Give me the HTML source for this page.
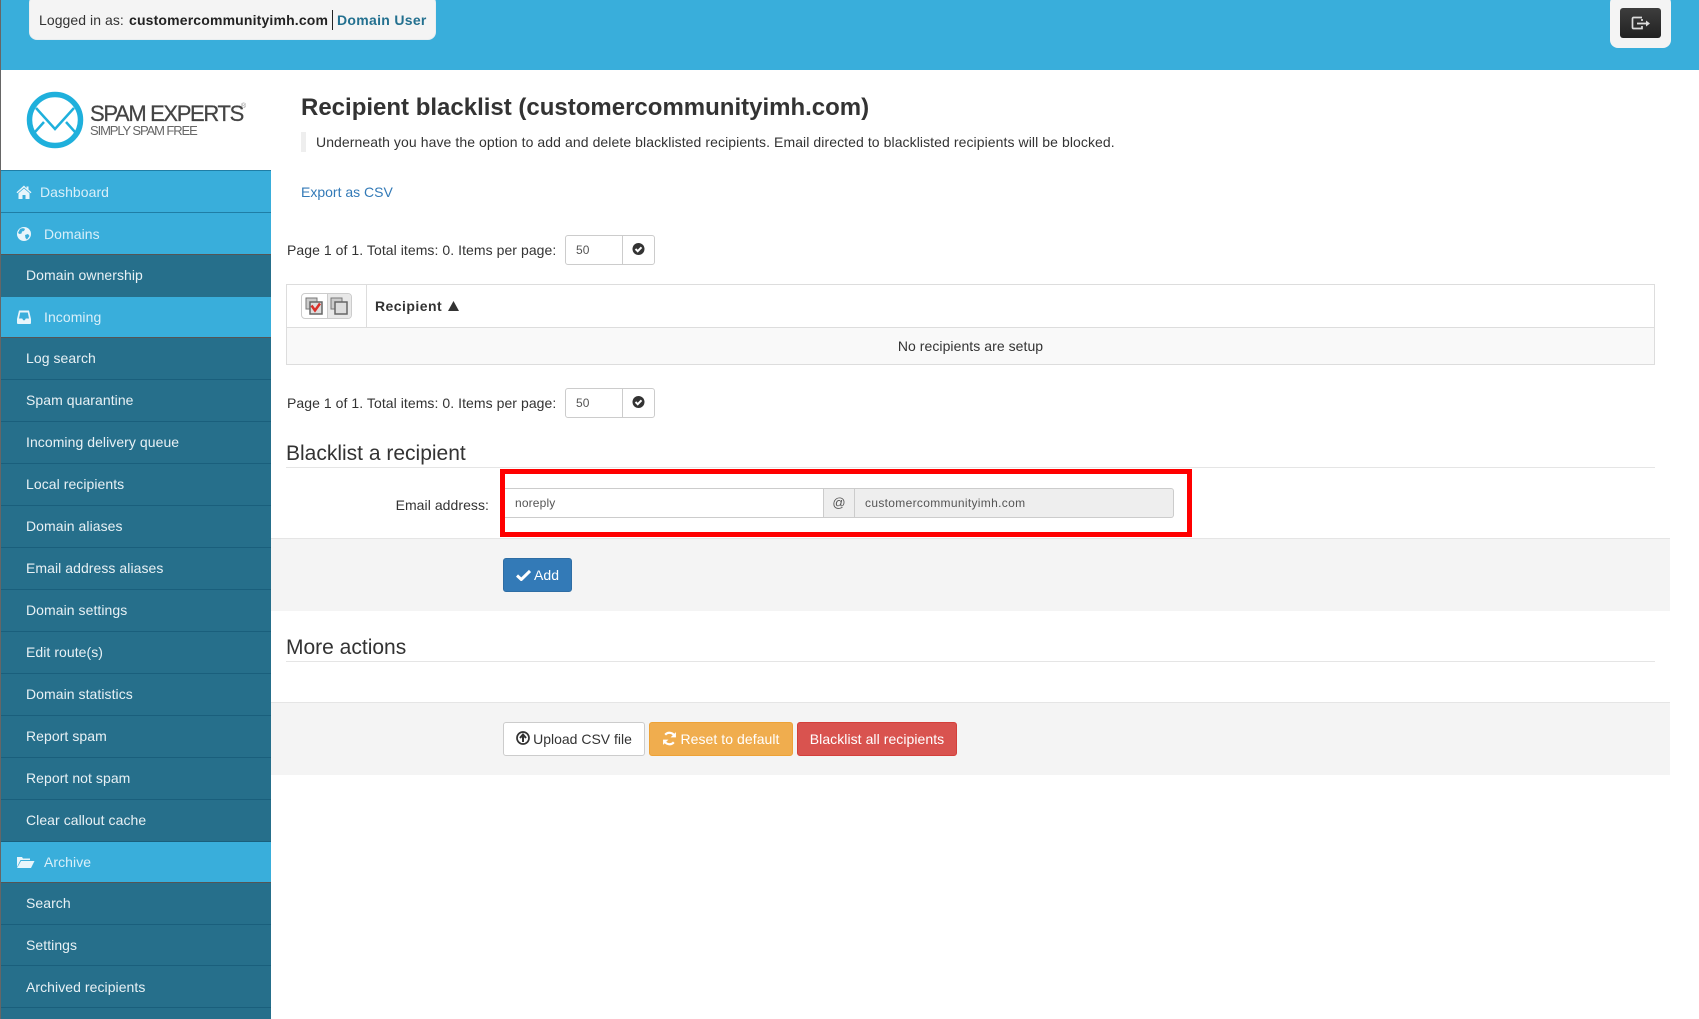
<!DOCTYPE html>
<html><head><meta charset="utf-8"><title>Recipient blacklist</title>
<style>
*{box-sizing:border-box}
html,body{margin:0;padding:0;width:1699px;height:1019px;overflow:hidden;background:#fff;font-family:"Liberation Sans",sans-serif;font-size:14px;color:#333;letter-spacing:.06px}
.a{position:absolute}
.t{position:absolute;white-space:nowrap;line-height:20px}
.r{position:absolute;left:1px;width:270px;background:#266f8b;border-top:1px solid #1a5f7c;color:#e8f1f5;display:flex;align-items:center;padding-left:25px;padding-bottom:2px}
.r.b{background:#39aedb;border-top:1px solid #1f7ea6;color:#d9eff9;padding-left:0;padding-bottom:0}
.r.g{border-top:1px solid #555}
.r.n{padding-bottom:0}
.r svg{position:absolute;left:15px;top:50%;margin-top:-8px}
.ig{position:absolute;left:565px;width:90px;height:30px;border:1px solid #ccc;border-radius:3px;background:#fff}
.ig i{position:absolute;left:56px;top:0;bottom:0;width:1px;background:#ccc}
.ig span{position:absolute;left:10px;top:4px;font-size:12px;line-height:20px;color:#555}
.ig svg{position:absolute;left:64px;top:5px}
.ft{position:absolute;left:271px;width:1399px;height:73px;background:#f4f4f4;border-top:1px solid #e5e5e5}
.btn{position:absolute;height:34px;border-radius:3px;border:1px solid;line-height:32px;text-align:center;white-space:nowrap}
h3{position:absolute;margin:0;left:286px;font-size:21px;line-height:24px;font-weight:400;color:#333;white-space:nowrap;letter-spacing:0}
.hr{position:absolute;left:286px;width:1369px;height:1px;background:#e5e5e5}
</style></head><body>
<div class="a" style="left:0;top:0;width:1px;height:1019px;background:#666;z-index:5"></div>
<div class="a" style="left:0;top:0;width:1699px;height:70px;background:#39aedb"></div>
<div class="a" style="left:29px;top:-5px;width:407px;height:45px;background:#f4f4f4;border-radius:8px;border:1px solid #e9eef0"></div>
<div class="t" style="left:39px;top:10px">Logged in as:</div>
<div class="t" style="left:129px;top:10px;font-weight:700;color:#222;letter-spacing:.16px">customercommunityimh.com</div>
<div class="a" style="left:332px;top:10px;width:1px;height:20px;background:#222"></div>
<div class="t" style="left:337px;top:10px;font-weight:700;color:#23708f;letter-spacing:.3px">Domain User</div>

<div class="a" style="left:1610px;top:-5px;width:61px;height:53px;background:#f4f4f4;border-radius:8px"></div>
<div class="a" style="left:1620px;top:8px;width:41px;height:30px;border-radius:3px;background:linear-gradient(#3d3d3d,#222)"></div>
<svg class="a" style="left:1631px;top:16px" width="21" height="15" viewBox="0 0 21 15" fill="none"><path d="M11 1.500H2.500a1 1 0 0 0-1 1v9a1 1 0 0 0 1 1H11v-2.500" stroke="#ddd" stroke-width="1.700"/><path d="M11 3v2" stroke="#ddd" stroke-width="1.700"/><path d="M6 7.500h10" stroke="#ddd" stroke-width="1.800"/><path d="M15 4.500l4 3-4 3z" fill="#ddd"/></svg>

<!-- logo -->
<svg class="a" style="left:26px;top:91px" width="58" height="58" viewBox="0 0 58 58" fill="none"><circle cx="29" cy="29" r="25.500" stroke="#1fb0dc" stroke-width="5.500"/><path d="M10 17l19 21 19-21" stroke="#1fb0dc" stroke-width="2.500"/><path d="M9 41l9-10M49 41l-9-10" stroke="#1fb0dc" stroke-width="2.500"/></svg>
<div class="t" style="left:90px;top:103px;font-size:22px;line-height:22px;letter-spacing:-1.350px;color:#444;-webkit-text-stroke:.25px #444">SPAM EXPERTS</div>
<div class="t" style="left:241px;top:103px;font-size:7px;line-height:8px;color:#888;letter-spacing:0">®</div>
<div class="t" style="left:90px;top:123px;font-size:13px;line-height:16px;letter-spacing:-1.100px;color:#666">SIMPLY SPAM FREE</div>

<!-- sidebar -->
<div class="r b" style="top:170px;height:42px"><svg width="16" height="16" viewBox="0 0 16 16"><path d="M8 1.500L0.500 8.300l.9 1L8 3.500l6.600 5.800.9-1-3-2.700V2.500h-2v1.700z" fill="#e8f5fb"/><path d="M2.500 9.300L8 4.500l5.500 4.800V15H9.500v-4h-3v4h-4z" fill="#e8f5fb"/></svg><span style="margin-left:39px">Dashboard</span></div>
<div class="r b g" style="top:212px;height:42px;border-top-color:#1f7ea6"><svg width="16" height="16" viewBox="0 0 16 16"><circle cx="8" cy="8" r="7" fill="#e8f5fb"/><path d="M4 3c2-1 4-1 5 0l-1 2-2 .5-.5 2-2 .5-1.500-1zM9 9l3-1 1.500 2-2.500 3.500-1.500-1.500z" fill="#39aedb"/></svg><span style="margin-left:43px">Domains</span></div>
<div class="r g" style="top:254px;height:42px"><span>Domain ownership</span></div>
<div class="r b" style="top:296px;height:41px;border-top-color:#266f8b"><svg width="16" height="16" viewBox="0 0 16 16"><path d="M3 1.500h10L15 10v4a1 1 0 0 1-1 1H2a1 1 0 0 1-1-1v-4zM4.200 3.500L3 9.500h3.200l1 1.800h1.600l1-1.800H13l-1.200-6z" fill="#e8f5fb" fill-rule="evenodd"/></svg><span style="margin-left:43px">Incoming</span></div>
<div class="r g" style="top:337px;height:42px"><span>Log search</span></div>
<div class="r" style="top:379px;height:42px"><span>Spam quarantine</span></div>
<div class="r" style="top:421px;height:42px"><span>Incoming delivery queue</span></div>
<div class="r" style="top:463px;height:42px"><span>Local recipients</span></div>
<div class="r" style="top:505px;height:42px"><span>Domain aliases</span></div>
<div class="r" style="top:547px;height:42px"><span>Email address aliases</span></div>
<div class="r" style="top:589px;height:42px"><span>Domain settings</span></div>
<div class="r" style="top:631px;height:42px"><span>Edit route(s)</span></div>
<div class="r" style="top:673px;height:42px"><span>Domain statistics</span></div>
<div class="r" style="top:715px;height:42px"><span>Report spam</span></div>
<div class="r" style="top:757px;height:42px"><span>Report not spam</span></div>
<div class="r" style="top:799px;height:42px"><span>Clear callout cache</span></div>
<div class="r b" style="top:841px;height:41px;border-top-color:#1a5f7c"><svg width="19" height="16" viewBox="0 0 19 16" style="left:15px"><path d="M1 3h5l1 1.500h7V6H4.500L1 13z" fill="#e8f5fb"/><path d="M5 7h13.500L15 14H1z" fill="#e8f5fb"/></svg><span style="margin-left:43px">Archive</span></div>
<div class="r g" style="top:882px;height:42px"><span>Search</span></div>
<div class="r n" style="top:924px;height:41px"><span>Settings</span></div>
<div class="r n" style="top:965px;height:42px"><span>Archived recipients</span></div>
<div class="r" style="top:1007px;height:12px"></div>

<!-- main -->
<div class="t" style="left:301px;top:93px;font-size:24px;line-height:30px;font-weight:700;color:#333;letter-spacing:0">Recipient blacklist (customercommunityimh.com)</div>
<div class="a" style="left:301px;top:132px;width:5px;height:20px;background:#eee"></div>
<div class="t" style="left:316px;top:132px;letter-spacing:.08px">Underneath you have the option to add and delete blacklisted recipients. Email directed to blacklisted recipients will be blocked.</div>
<div class="t" style="left:301px;top:182px;color:#337ab7;letter-spacing:0">Export as CSV</div>

<div class="t" style="left:287px;top:240px">Page 1 of 1. Total items: 0. Items per page:</div>
<div class="ig" style="top:235px"><span>50</span><i></i><svg width="17" height="16" viewBox="0 0 16 16"><circle cx="8" cy="8" r="6" fill="#333"/><path d="M5 8l2.200 2.200L11 6.300" stroke="#fff" stroke-width="2" fill="none"/></svg></div>

<div class="a" style="left:286px;top:284px;width:1369px;height:81px;border:1px solid #ddd;background:#f9f9f9"></div>
<div class="a" style="left:287px;top:285px;width:1367px;height:43px;background:#fff;border-bottom:1px solid #ddd"></div>
<div class="a" style="left:366px;top:285px;width:1px;height:42px;background:#ddd"></div>
<div class="a" style="left:301px;top:293px;width:51px;height:26px;border:1px solid #ccc;border-radius:4px;background:#fff;overflow:hidden"><div class="a" style="left:25px;top:0;width:25px;height:26px;background:#e8e8e8;border-left:1px solid #ccc"></div></div>
<svg class="a" style="left:305px;top:297px" width="18" height="18" viewBox="0 0 18 18" fill="none"><rect x="1" y="1" width="11" height="11" fill="#ccc" stroke="#777"/><rect x="5" y="5" width="12" height="12" fill="#ddd" stroke="#666" stroke-width="1.500"/><path d="M6.500 8.500l3.500 5L15 6.500" stroke="#d9302a" stroke-width="2.500"/></svg>
<svg class="a" style="left:330px;top:297px" width="18" height="18" viewBox="0 0 18 18" fill="none"><rect x="1" y="1" width="11" height="11" fill="#ccc" stroke="#777"/><rect x="5" y="5" width="12" height="12" fill="#ddd" stroke="#666" stroke-width="1.500"/></svg>
<div class="t" style="left:375px;top:296px;font-weight:700;letter-spacing:.45px">Recipient</div>
<svg class="a" style="left:448px;top:301px" width="11" height="10" viewBox="0 0 11 10"><path d="M5.500 0L11 10H0z" fill="#333"/></svg>
<div class="t" style="left:287px;width:1367px;top:336px;text-align:center">No recipients are setup</div>

<div class="t" style="left:287px;top:393px">Page 1 of 1. Total items: 0. Items per page:</div>
<div class="ig" style="top:388px"><span>50</span><i></i><svg width="17" height="16" viewBox="0 0 16 16"><circle cx="8" cy="8" r="6" fill="#333"/><path d="M5 8l2.200 2.200L11 6.300" stroke="#fff" stroke-width="2" fill="none"/></svg></div>

<h3 style="top:442px">Blacklist a recipient</h3>
<div class="hr" style="top:467px"></div>

<div class="t" style="right:1210px;top:495px">Email address:</div>
<div class="a" style="left:505px;top:488px;width:669px;height:30px;border:1px solid #ccc;border-left:0;border-radius:0 3px 3px 0;background:#eee"></div>
<div class="a" style="left:505px;top:488px;width:319px;height:30px;background:#fff;border:1px solid #ccc;border-left:0"></div>
<div class="a" style="left:854px;top:488px;width:1px;height:30px;background:#ccc"></div>
<div class="t" style="left:515px;top:493px;font-size:12px;color:#555;letter-spacing:.15px">noreply</div>
<div class="t" style="left:824px;width:30px;text-align:center;top:493px;font-size:13px;color:#555">@</div>
<div class="t" style="left:865px;top:493px;font-size:12px;color:#555;letter-spacing:.32px">customercommunityimh.com</div>
<div class="a" style="left:500px;top:469px;width:692px;height:68px;border:5px solid #f00"></div>

<div class="ft" style="top:538px"></div>
<div class="btn" style="left:503px;top:558px;width:69px;background:#337ab7;border-color:#2e6da4;color:#fff"><svg width="15" height="12" viewBox="0 0 15 12" style="vertical-align:-1px;margin-right:3px"><path d="M1 6.500l4.300 4L14 2" stroke="#fff" stroke-width="3" fill="none"/></svg>Add</div>

<h3 style="top:636px">More actions</h3>
<div class="hr" style="top:661px"></div>

<div class="ft" style="top:702px"></div>
<div class="btn" style="left:503px;top:722px;width:142px;background:#fff;border-color:#ccc;color:#333;letter-spacing:0"><svg width="14" height="14" viewBox="0 0 14 14" style="vertical-align:-1px;margin-right:3px"><circle cx="7" cy="7" r="6" fill="none" stroke="#333" stroke-width="1.700"/><path d="M7 11V4M4 7l3-3.500L10 7" stroke="#333" stroke-width="2" fill="none"/></svg>Upload CSV file</div>
<div class="btn" style="left:649px;top:722px;width:144px;background:#f0ad4e;border-color:#eea236;color:#fff"><svg width="15" height="15" viewBox="0 0 14 14" style="vertical-align:-2px;margin-right:3px"><path d="M12 5.500A5.200 5.200 0 0 0 3 3.500M2 8.500A5.200 5.200 0 0 0 11 10.500" stroke="#fff" stroke-width="2" fill="none"/><path d="M13 1v5H8zM1 13V8h5z" fill="#fff"/></svg>Reset to default</div>
<div class="btn" style="left:797px;top:722px;width:160px;background:#d9534f;border-color:#d43f3a;color:#fff">Blacklist all recipients</div>
</body></html>
